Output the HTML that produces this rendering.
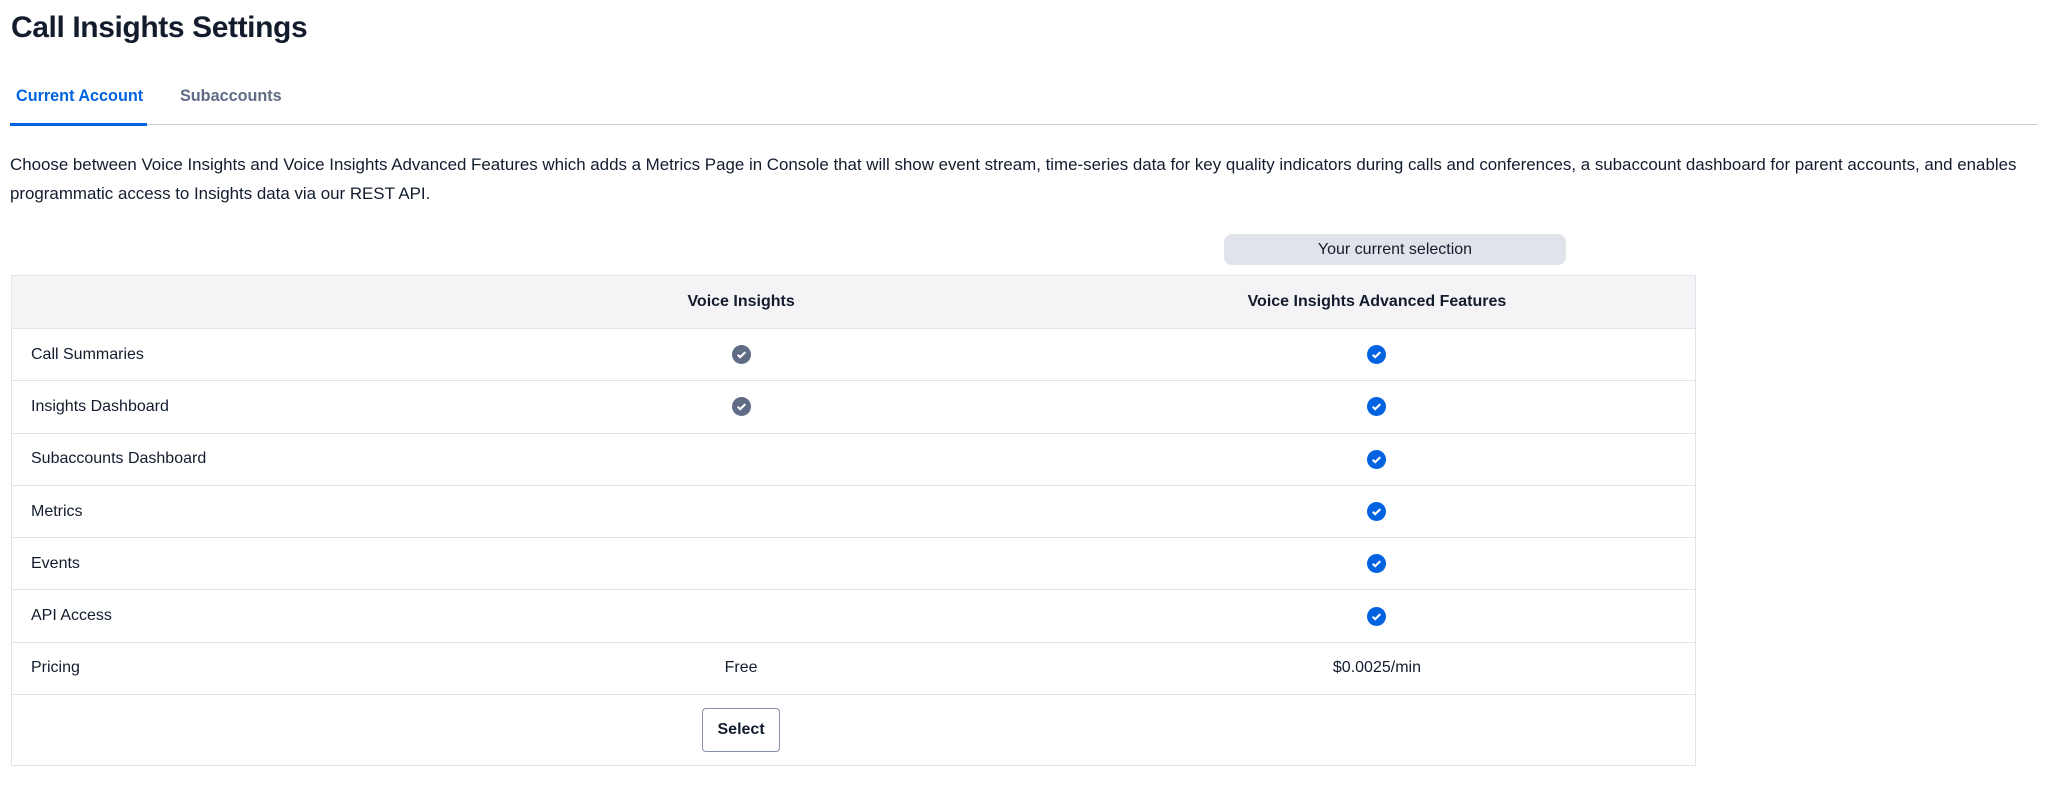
<!DOCTYPE html>
<html><head><meta charset="utf-8"><style>
*{box-sizing:border-box;margin:0;padding:0}
body{width:2048px;height:787px;background:#fff;font-family:"Liberation Sans",sans-serif;color:#121c2d;position:relative;overflow:hidden}
h1{position:absolute;left:11px;top:11px;font-size:30px;font-weight:700;letter-spacing:-0.4px}
.tab{position:absolute;top:87px;font-size:16.2px;font-weight:700}
.tabline{position:absolute;left:10px;top:124px;width:2028px;height:1px;background:#cacdd8}
.ul{position:absolute;left:10px;top:123px;width:137px;height:3px;background:#0263e0}
p{position:absolute;left:10px;top:150px;width:2030px;font-size:16.9px;line-height:29px}
.pill{position:absolute;left:1224px;top:234px;width:342px;height:31px;background:#e1e3ea;border-radius:8px;text-align:center;font-size:16px;line-height:31px}
table{position:absolute;left:11px;top:275px;border-collapse:collapse;width:1685px;font-size:16px;border:1px solid #e1e3ea}
td,th{border-top:1px solid #e1e3ea;border-bottom:1px solid #e1e3ea;height:52.3px;padding:0}
th{background:#f4f4f6;height:53px;font-weight:700}
td:first-child{padding-left:19px}
td.c,th{text-align:center}
.ic{display:inline-block;width:19px;height:19px;vertical-align:middle}
.btn{display:inline-block;width:78px;height:44px;border:1px solid #8891aa;border-radius:4px;font-weight:700;line-height:42px;font-size:16px}
</style></head><body>
<h1>Call Insights Settings</h1>
<div class="tab" style="left:16px;color:#0263e0">Current Account</div>
<div class="tab" style="left:180px;color:#606b85">Subaccounts</div>
<div class="tabline"></div><div class="ul"></div>
<p>Choose between Voice Insights and Voice Insights Advanced Features which adds a Metrics Page in Console that will show event stream, time-series data for key quality indicators during calls and conferences, a subaccount dashboard for parent accounts, and enables programmatic access to Insights data via our REST API.</p>
<div class="pill">Your current selection</div>
<table>
<colgroup><col style="width:412px"><col style="width:636px"><col style="width:637px"></colgroup>
<tr><th></th><th>Voice Insights</th><th>Voice Insights Advanced Features</th></tr>
<tr><td>Call Summaries</td><td class="c"><svg class="ic" viewBox="0 0 20 20"><circle cx="10" cy="10" r="10" fill="#606b85"/><path d="M6 10.3l2.6 2.5L14 7.5" stroke="#fff" stroke-width="2.2" fill="none"/></svg></td><td class="c"><svg class="ic" viewBox="0 0 20 20"><circle cx="10" cy="10" r="10" fill="#0263e0"/><path d="M6 10.3l2.6 2.5L14 7.5" stroke="#fff" stroke-width="2.2" fill="none"/></svg></td></tr>
<tr><td>Insights Dashboard</td><td class="c"><svg class="ic" viewBox="0 0 20 20"><circle cx="10" cy="10" r="10" fill="#606b85"/><path d="M6 10.3l2.6 2.5L14 7.5" stroke="#fff" stroke-width="2.2" fill="none"/></svg></td><td class="c"><svg class="ic" viewBox="0 0 20 20"><circle cx="10" cy="10" r="10" fill="#0263e0"/><path d="M6 10.3l2.6 2.5L14 7.5" stroke="#fff" stroke-width="2.2" fill="none"/></svg></td></tr>
<tr><td>Subaccounts Dashboard</td><td></td><td class="c"><svg class="ic" viewBox="0 0 20 20"><circle cx="10" cy="10" r="10" fill="#0263e0"/><path d="M6 10.3l2.6 2.5L14 7.5" stroke="#fff" stroke-width="2.2" fill="none"/></svg></td></tr>
<tr><td>Metrics</td><td></td><td class="c"><svg class="ic" viewBox="0 0 20 20"><circle cx="10" cy="10" r="10" fill="#0263e0"/><path d="M6 10.3l2.6 2.5L14 7.5" stroke="#fff" stroke-width="2.2" fill="none"/></svg></td></tr>
<tr><td>Events</td><td></td><td class="c"><svg class="ic" viewBox="0 0 20 20"><circle cx="10" cy="10" r="10" fill="#0263e0"/><path d="M6 10.3l2.6 2.5L14 7.5" stroke="#fff" stroke-width="2.2" fill="none"/></svg></td></tr>
<tr><td>API Access</td><td></td><td class="c"><svg class="ic" viewBox="0 0 20 20"><circle cx="10" cy="10" r="10" fill="#0263e0"/><path d="M6 10.3l2.6 2.5L14 7.5" stroke="#fff" stroke-width="2.2" fill="none"/></svg></td></tr>
<tr><td>Pricing</td><td class="c">Free</td><td class="c">$0.0025/min</td></tr>
<tr><td style="height:71px"></td><td class="c" style="height:71px"><span class="btn">Select</span></td><td></td></tr>
</table>
</body></html>
